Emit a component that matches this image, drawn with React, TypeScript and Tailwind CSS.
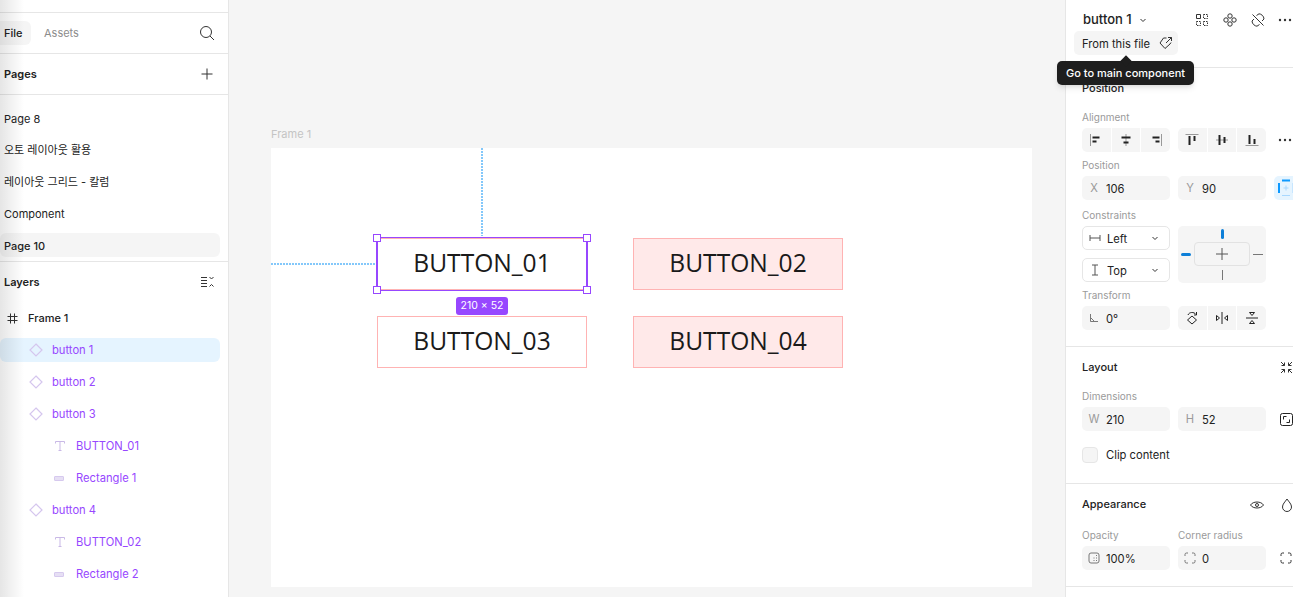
import type { ReactNode } from "react"

const FONT = "font-['Inter','Noto_Sans_CJK_KR',sans-serif]"

function Icon({ size = 16, className = "", children }: { size?: number; className?: string; children: ReactNode }) {
  return (
    <svg width={size} height={size} viewBox={`0 0 ${size} ${size}`} fill="none" stroke="currentColor" strokeWidth="1" className={`shrink-0 ${className}`}>
      {children}
    </svg>
  )
}

const DiamondIcon = () => (
  <Icon size={14} className="text-[#d5c6ee]">
    <path d="M7 1 L13 7 L7 13 L1 7 Z" strokeWidth="1.2" />
  </Icon>
)

const TextIcon = () => (
  <Icon size={12} className="text-[#c9b9e6]">
    <path d="M1.5 3.5 V1.5 H10.5 V3.5 M6 1.5 V10.5 M4.5 10.5 H7.5" />
  </Icon>
)

const RectIcon = () => <div className="h-[5px] w-[10px] shrink-0 rounded-[1px] border border-[#d6c9ee] bg-[#e6dff4]" />

function PageRow({ label, selected }: { label: string; selected?: boolean }) {
  return (
    <div className="mr-2 flex h-8 items-center">
      <div className={`flex h-6 w-full items-center rounded-md pl-1 text-[11px] text-[#222] ${selected ? "bg-[#f5f5f5] font-medium" : ""}`}>
        <span className="translate-y-px">{label}</span>
      </div>
    </div>
  )
}

function LayerRow({ label, kind, selected }: { label: string; kind: "comp" | "text" | "rect"; selected?: boolean }) {
  return (
    <div className="mr-2 flex h-8 items-center">
      <div className={`flex h-6 w-full items-center rounded-md text-[11.2px] text-[#9747ff] ${selected ? "bg-[#e5f4ff]" : ""} ${kind === "comp" ? "pl-[29px]" : "pl-[54px]"}`}>
        <div className={`flex items-center justify-start ${kind === "comp" ? "w-[23px]" : "w-[22px]"}`}>
          {kind === "comp" && <DiamondIcon />}
          {kind === "text" && <TextIcon />}
          {kind === "rect" && <RectIcon />}
        </div>
        <span>{label}</span>
      </div>
    </div>
  )
}

function LeftPanel() {
  return (
    <aside className="relative h-full w-[229px] shrink-0 overflow-hidden border-r border-[#e6e6e6] bg-white">
      <div className="h-[13px] border-b border-[#e6e6e6]" />
      <div className="flex h-[41px] items-center border-b border-[#e6e6e6] pr-[13px]">
        <div className="flex h-6 w-[31px] items-center rounded-r-md bg-[#f5f5f5] pl-1 text-[11px] font-medium text-[#222]">File</div>
        <div className="ml-[13px] text-[11px] text-[#8c8c8c]">Assets</div>
        <Icon className="ml-auto text-[#333]">
          <circle cx="7" cy="7" r="5.5" />
          <path d="M11 11 L15 15" />
        </Icon>
      </div>
      <div className="flex h-[41px] items-center border-b border-[#e6e6e6] pl-1 pr-[13px]">
        <span className="text-[11px] font-semibold text-[#222]">Pages</span>
        <Icon className="ml-auto text-[#333]">
          <path d="M8 2.5 V13.5 M2.5 8 H13.5" />
        </Icon>
      </div>
      <div className="flex h-[167px] flex-col border-b border-[#e6e6e6] pt-[7px]">
        <PageRow label="Page 8" />
        <PageRow label="오토 레이아웃 활용" />
        <PageRow label="레이아웃 그리드 - 칼럼" />
        <PageRow label="Component" />
        <PageRow label="Page 10" selected />
      </div>
      <div className="flex h-10 items-center pl-1 pr-[13px]">
        <span className="text-[11px] font-semibold text-[#222]">Layers</span>
        <Icon className="ml-auto text-[#333]">
          <path d="M2 3.5 H8 M2 6.5 H8 M2 9.5 H8 M2 12.5 H8 M10.5 3 L12.5 5 L14.5 3 M10.5 12.5 L12.5 10.5 L14.5 12.5" />
        </Icon>
      </div>
      <div className="flex h-[32px] items-center pl-[7px] text-[11px] font-medium text-[#222]">
        <Icon size={11} className="text-[#333]">
          <path d="M3.5 0.5 V10.5 M7.5 0.5 V10.5 M0.5 3.5 H10.5 M0.5 7.5 H10.5" />
        </Icon>
        <span className="ml-[10px]">Frame 1</span>
      </div>
      <LayerRow label="button 1" kind="comp" selected />
      <LayerRow label="button 2" kind="comp" />
      <LayerRow label="button 3" kind="comp" />
      <LayerRow label="BUTTON_01" kind="text" />
      <LayerRow label="Rectangle 1" kind="rect" />
      <LayerRow label="button 4" kind="comp" />
      <LayerRow label="BUTTON_02" kind="text" />
      <LayerRow label="Rectangle 2" kind="rect" />
      {/* 左端のフェード */}
      <div className="pointer-events-none absolute inset-y-0 left-0 w-6 bg-gradient-to-r from-black/10 to-transparent" />
    </aside>
  )
}

function CanvasButton({ label, left, top, filled }: { label: string; left: string; top: string; filled?: boolean }) {
  return (
    <div className={`absolute flex h-[52px] w-[210px] items-center justify-center border border-[#ffb3b3] pb-[2px] font-['Open_Sans',sans-serif] text-[24.6px] font-normal text-[#1a1a1a] ${left} ${top} ${filled ? "bg-[#ffe9e9]" : "bg-white"}`}>
      {label}
    </div>
  )
}

function Handle({ className }: { className: string }) {
  return <div className={`absolute h-2 w-2 border border-[#9747ff] bg-white ${className}`} />
}

function Canvas() {
  return (
    <main className="relative h-full flex-1 overflow-hidden bg-[#f5f5f5]">
      <div className="absolute left-[42px] top-[127px] text-[11px] leading-[14px] text-[#c4c4c4]">Frame 1</div>
      <div className="absolute left-[42px] top-[148px] h-[439px] w-[761px] bg-white">
        <CanvasButton label="BUTTON_01" left="left-[106px]" top="top-[90px]" />
        <CanvasButton label="BUTTON_02" left="left-[362px]" top="top-[90px]" filled />
        <CanvasButton label="BUTTON_03" left="left-[106px]" top="top-[168px]" />
        <CanvasButton label="BUTTON_04" left="left-[362px]" top="top-[168px]" filled />
        <div className="absolute left-[210px] top-0 h-[88px] w-[2px] bg-[repeating-linear-gradient(to_bottom,#84c8fa_0,#84c8fa_2px,transparent_2px,transparent_3px)]" />
        <div className="absolute left-0 top-[115px] h-[2px] w-[104px] bg-[repeating-linear-gradient(to_right,#84c8fa_0,#84c8fa_2px,transparent_2px,transparent_3px)]" />
        <div className="absolute left-[105px] top-[89px] h-[54px] w-[212px] border-x-2 border-y border-[#9747ff]" />
        <Handle className="left-[102px] top-[86px]" />
        <Handle className="left-[312px] top-[86px]" />
        <Handle className="left-[102px] top-[138px]" />
        <Handle className="left-[312px] top-[138px]" />
        <div className="absolute left-[185px] top-[149px] flex h-[18px] w-[52px] items-center justify-center rounded-[3px] bg-[#9747ff] text-[10.5px] text-white">210 × 52</div>
      </div>
    </main>
  )
}

function Label({ children, className = "" }: { children: ReactNode; className?: string }) {
  return <div className={`text-[10px] leading-[14px] text-[#9a9a9a] ${className}`}>{children}</div>
}

function Field({ prefix, value }: { prefix: ReactNode; value: string }) {
  return (
    <div className="flex h-6 w-[88px] shrink-0 items-center rounded-[5px] bg-[#f5f5f5] text-[11.2px] text-[#222]">
      <div className="flex w-6 items-center justify-center text-[#9a9a9a]">{prefix}</div>
      <span className="translate-y-px">{value}</span>
    </div>
  )
}

function Segments({ children }: { children: ReactNode[] }) {
  return (
    <div className="flex h-6 w-[88px] shrink-0 gap-px overflow-hidden rounded-[5px]">
      {children.map((c, i) => (
        <div key={i} className="flex flex-1 items-center justify-center bg-[#f5f5f5] text-[#222]">
          {c}
        </div>
      ))}
    </div>
  )
}

const Dots = () => (
  <svg width="14" height="4" viewBox="0 0 14 4" fill="currentColor" className="shrink-0 text-[#333]">
    <circle cx="2" cy="2" r="1.2" />
    <circle cx="7" cy="2" r="1.2" />
    <circle cx="12" cy="2" r="1.2" />
  </svg>
)

const Chevron = ({ className = "" }: { className?: string }) => (
  <svg width="8" height="5" viewBox="0 0 8 5" fill="none" stroke="currentColor" className={`shrink-0 text-[#333] ${className}`}>
    <path d="M1.5 1 L4 3.5 L6.5 1" />
  </svg>
)

function SelectBox({ icon, label }: { icon: ReactNode; label: string }) {
  return (
    <div className="flex h-6 w-[88px] items-center rounded-[5px] border border-[#e6e6e6] bg-white pl-[6px] pr-[10px] text-[11.2px] text-[#222]">
      <div className="flex w-[18px] items-center text-[#555]">{icon}</div>
      <span className="translate-y-px">{label}</span>
      <Chevron className="ml-auto" />
    </div>
  )
}

function RightPanel() {
  return (
    <aside className="relative h-full w-[228px] shrink-0 overflow-hidden border-l border-[#e6e6e6] bg-white text-[#222]">
      {/* ヘッダー */}
      <div className="h-[68px] border-b border-[#e6e6e6]">
        <div className="flex h-[40px] items-center pl-[17px] pr-px">
          <span className="text-[13px] font-medium">button 1</span>
          <Chevron className="ml-[7px]" />
          <Icon size={14} className="ml-auto text-[#333]">
            <path d="M1.5 1.5 H5.5 V5.5 H1.5 Z" />
            <path d="M8.5 1.5 H12.5 V5.5 H8.5 Z M1.5 8.5 H5.5 V12.5 H1.5 Z M8.5 8.5 H12.5 V12.5 H8.5 Z" strokeDasharray="1.5 1" />
          </Icon>
          <Icon size={14} className="ml-[14px] text-[#333]">
            <circle cx="7" cy="3" r="2.2" />
            <circle cx="3" cy="7" r="2.2" />
            <circle cx="11" cy="7" r="2.2" />
            <circle cx="7" cy="11" r="2.2" />
          </Icon>
          <Icon size={14} className="ml-[14px] text-[#333]">
            <path d="M1.5 1.5 L12.5 12.5 M5.5 2.5 L8 0.8 C10 0.8 13 3 13 6 L11 8 M8.5 11.5 L6 13.2 C4 13.2 1 11 1 8 L3 6" />
          </Icon>
          <div className="ml-[13px]">
            <Dots />
          </div>
        </div>
        <div className="ml-2 -mt-[9px] flex h-6 w-[104px] items-center rounded-[5px] bg-[#f5f5f5] pl-2 text-[11.2px]">
          <span className="translate-y-px">From this file</span>
          <Icon size={14} className="ml-[9px] text-[#333]">
            <path d="M7.5 2 H4.5 L1 7 L6 12.5 L11 8 L12 6.5 M7 7 L12.5 1.5 M9 1.5 H12.5 V5" />
          </Icon>
        </div>
      </div>

      {/* Position */}
      <div className="h-[279px] border-b border-[#e6e6e6] pl-4 pt-[13px]">
        <div className="text-[11px] font-medium leading-[14px]">Position</div>
        <Label className="mt-[15px]">Alignment</Label>
        <div className="mt-[4px] flex items-center gap-2">
          <Segments>
            <Icon size={14}>
              <path d="M1.5 1 V13" stroke="#999" />
              <path d="M3.5 4.5 H10.5 M3.5 8.5 H7.5" strokeWidth="2" />
            </Icon>
            <Icon size={14}>
              <path d="M7 1 V13" stroke="#999" />
              <path d="M2.5 4.5 H11.5 M4.5 9.5 H9.5" strokeWidth="2" />
            </Icon>
            <Icon size={14}>
              <path d="M12.5 1 V13" stroke="#999" />
              <path d="M3.5 4.5 H10.5 M6.5 8.5 H10.5" strokeWidth="2" />
            </Icon>
          </Segments>
          <Segments>
            <Icon size={14}>
              <path d="M0.5 1.5 H13.5" stroke="#999" />
              <path d="M4.5 3 V12 M9.5 3 V8" strokeWidth="2" />
            </Icon>
            <Icon size={14}>
              <path d="M1 7 H13" stroke="#999" />
              <path d="M4.5 2 V12 M9.5 4 V10" strokeWidth="2" />
            </Icon>
            <Icon size={14}>
              <path d="M0.5 12.5 H13.5" stroke="#999" />
              <path d="M4.5 2 V11 M9.5 6 V11" strokeWidth="2" />
            </Icon>
          </Segments>
          <div className="ml-[4px]">
            <Dots />
          </div>
        </div>
        <Label className="mt-[6px]">Position</Label>
        <div className="mt-[4px] flex items-center gap-2">
          <Field prefix={<span className="text-[11.2px]">X</span>} value="106" />
          <Field prefix={<span className="text-[11.2px]">Y</span>} value="90" />
          <div className="flex h-6 w-6 shrink-0 items-center justify-center rounded-[5px] bg-[#e5f4ff]">
            <svg width="24" height="24" viewBox="0 0 24 24" fill="none" className="shrink-0">
              <path d="M5 7 V17 M8 4.5 H16" stroke="#0d99ff" strokeWidth="2" />
              <path d="M8 19.5 H16 M19 7 V17 M12 9.5 V14.5 M9.5 12 H14.5" stroke="#a8d8ff" />
            </svg>
          </div>
        </div>
        <Label className="mt-[8px]">Constraints</Label>
        <div className="mt-[4px] flex gap-2">
          <div className="flex flex-col gap-2">
            <SelectBox
              label="Left"
              icon={
                <Icon size={12}>
                  <path d="M1 3 V9 M11 3 V9 M1 6 H11" />
                </Icon>
              }
            />
            <SelectBox
              label="Top"
              icon={
                <Icon size={12}>
                  <path d="M3 1 H9 M3 11 H9 M6 1 V11" />
                </Icon>
              }
            />
          </div>
          <div className="relative h-[57px] w-[88px] shrink-0 rounded-[5px] bg-[#f5f5f5]">
            <div className="absolute left-[16px] top-[16px] flex h-6 w-14 items-center justify-center rounded-[4px] border border-[#e2e2e2]">
              <Icon size={14} className="text-[#555]">
                <path d="M7 1 V13 M1 7 H13" />
              </Icon>
            </div>
            <div className="absolute left-[43px] top-[3px] h-[10px] w-[3px] rounded-sm bg-[#0d7fd8]" />
            <div className="absolute left-[44px] top-[44px] h-[10px] w-px bg-[#777]" />
            <div className="absolute left-[3px] top-[27px] h-[3px] w-[10px] rounded-sm bg-[#0d7fd8]" />
            <div className="absolute left-[75px] top-[28px] h-px w-[10px] bg-[#777]" />
          </div>
        </div>
        <Label className="mt-[5px]">Transform</Label>
        <div className="mt-[4px] flex gap-2">
          <Field
            value="0°"
            prefix={
              <Icon size={10} className="text-[#777]">
                <path d="M1.5 1 V8.5 H9 M1.5 4.5 L5.5 8.5" />
              </Icon>
            }
          />
          <Segments>
            <Icon size={14}>
              <path d="M7 5 L11.5 9 L7 13 L2.5 9 Z M3 4 C4 1 9 0.5 11 3.5 M11.5 1 V4 H9" />
            </Icon>
            <Icon size={14}>
              <path d="M7 1 V13 M1.5 4.5 L4.5 7 L1.5 9.5 Z M12.5 4.5 L9.5 7 L12.5 9.5 Z" />
            </Icon>
            <Icon size={14}>
              <path d="M1 7 H13 M4.5 1.5 H9.5 L7 4.5 Z M4.5 12.5 H9.5 L7 9.5 Z" />
            </Icon>
          </Segments>
        </div>
      </div>

      {/* Layout */}
      <div className="h-[137px] border-b border-[#e6e6e6] pl-4">
        <div className="flex h-[41px] items-center">
          <span className="text-[11px] font-medium">Layout</span>
          <Icon size={13} className="ml-auto text-[#333]">
            <path d="M1 1 L4.5 4.5 M4.5 1.5 V4.5 H1.5 M12 1 L8.5 4.5 M8.5 1.5 V4.5 H11.5 M1 12 L4.5 8.5 M4.5 11.5 V8.5 H1.5 M12 12 L8.5 8.5 M8.5 11.5 V8.5 H11.5" />
          </Icon>
        </div>
        <Label className="mt-[1px]">Dimensions</Label>
        <div className="mt-[4px] flex items-center gap-2">
          <Field prefix={<span className="text-[11.2px]">W</span>} value="210" />
          <Field prefix={<span className="text-[11.2px]">H</span>} value="52" />
          <Icon size={13} className="-ml-[2px] translate-x-[8px] text-[#222]">
            <rect x="0.5" y="0.5" width="12" height="12" rx="2" />
            <path d="M3.5 6.5 V3.5 H6.5 M9.5 6.5 V9.5 H6.5" />
          </Icon>
        </div>
        <div className="mt-4 flex items-center">
          <div className="h-4 w-4 rounded-[4px] border border-[#e6e6e6] bg-[#f5f5f5]" />
          <span className="ml-2 text-[11.2px]">Clip content</span>
        </div>
      </div>

      {/* Appearance */}
      <div className="h-[103px] border-b border-[#e6e6e6] pl-4">
        <div className="flex h-[41px] items-center">
          <span className="text-[11px] font-medium">Appearance</span>
          <Icon size={14} className="ml-auto text-[#333]">
            <path d="M0.5 7 C3 3 11 3 13.5 7 C11 11 3 11 0.5 7 Z" />
            <circle cx="7" cy="7" r="1.5" />
          </Icon>
          <Icon size={14} className="-mr-px ml-4 text-[#333]">
            <path d="M7 1 C9 4 11.5 6 11.5 9 A4.5 4.5 0 0 1 2.5 9 C2.5 6 5 4 7 1 Z" />
          </Icon>
        </div>
        <div className="mt-[3px] flex gap-2">
          <Label className="w-[88px]">Opacity</Label>
          <Label className="w-[88px]">Corner radius</Label>
        </div>
        <div className="mt-[4px] flex items-center gap-2">
          <Field
            value="100%"
            prefix={
              <Icon size={12} className="text-[#777]">
                <rect x="1" y="1" width="10" height="10" rx="2" />
                <path d="M8 8.5 H9 M5.5 8.5 H6.5 M8 6 H9 M8 3.5 H9 M5.5 6 H6.5" />
              </Icon>
            }
          />
          <Field
            value="0"
            prefix={
              <Icon size={12} className="text-[#777]">
                <path d="M1 4 V2.5 A1.5 1.5 0 0 1 2.5 1 H4 M8 1 H9.5 A1.5 1.5 0 0 1 11 2.5 V4 M11 8 V9.5 A1.5 1.5 0 0 1 9.5 11 H8 M4 11 H2.5 A1.5 1.5 0 0 1 1 9.5 V8" />
              </Icon>
            }
          />
          <Icon size={12} className="translate-x-[6px] text-[#333]">
            <path d="M1 4 V2.5 A1.5 1.5 0 0 1 2.5 1 H4 M8 1 H9.5 A1.5 1.5 0 0 1 11 2.5 V4 M11 8 V9.5 A1.5 1.5 0 0 1 9.5 11 H8 M4 11 H2.5 A1.5 1.5 0 0 1 1 9.5 V8" />
          </Icon>
        </div>
      </div>
    </aside>
  )
}

export default function App() {
  return (
    <div className={`relative flex h-[597px] w-[1293px] overflow-hidden bg-[#f5f5f5] ${FONT}`}>
      <LeftPanel />
      <Canvas />
      <RightPanel />
      {/* ツールチップ */}
      <div className="absolute left-[1057px] top-[61px] flex h-6 w-[137px] items-center justify-center rounded-[5px] bg-[#1e1e1e] text-[11px] font-medium text-white shadow-md">
        Go to main component
        <div className="absolute left-[65px] top-[-4px] h-2 w-2 rotate-45 bg-[#1e1e1e]" />
      </div>
    </div>
  )
}
